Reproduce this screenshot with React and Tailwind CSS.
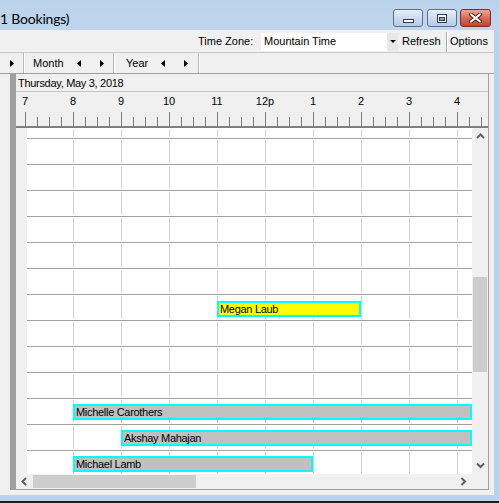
import React from 'react';

const hours = ['7', '8', '9', '10', '11', '12p', '1', '2', '3', '4'];

const bookings = {
    6: { name: 'Megan Laub', left: 190, width: 144, top: 6, bg: 'bg-[#ffff00]' },
    10: { name: 'Michelle Carothers', left: 46, width: 399, top: 5, bg: 'bg-[#c0c0c0]' },
    11: { name: 'Akshay Mahajan', left: 94, width: 351, top: 5, bg: 'bg-[#c0c0c0]' },
    12: { name: 'Michael Lamb', left: 46, width: 240, top: 5, bg: 'bg-[#c0c0c0]' },
};

function TriRight() {
    return (
        <svg width="4" height="7" viewBox="0 0 4 7"><path d="M0 0L4 3.5L0 7Z" fill="#000" /></svg>
    );
}

function TriLeft() {
    return (
        <svg width="4" height="7" viewBox="0 0 4 7"><path d="M4 0L0 3.5L4 7Z" fill="#000" /></svg>
    );
}

function Sep() {
    return <div className="w-[2px] self-stretch border-l border-[#b9b9b9] bg-white shrink-0" />;
}

function Chevron({ dir }) {
    const d = {
        up: 'M1 5L4.5 1.5L8 5',
        down: 'M1 1.5L4.5 5L8 1.5',
        left: 'M5 1L1.5 4.5L5 8',
        right: 'M1.5 1L5 4.5L1.5 8',
    }[dir];
    const vertical = dir === 'up' || dir === 'down';
    return (
        <svg width={vertical ? 9 : 7} height={vertical ? 7 : 9} viewBox={vertical ? '0 0 9 7' : '0 0 7 9'}>
            <path d={d} fill="none" stroke="#606060" strokeWidth="2" />
        </svg>
    );
}

// one schedule row: vertical hour lines + optional booking bar
function Row({ h, booking }) {
    return (
        <div className={`relative flex shrink-0 overflow-hidden border-b border-[#a0a0a0] ${h}`}>
            <div className="w-[46px] shrink-0" />
            {Array.from({ length: 9 }).map((_, i) => (
                <div key={i} className="w-[48px] shrink-0 my-[1px] border-l border-[#d4d4d4]" />
            ))}
            {booking && (
                <div
                    className={`absolute h-[16px] border-2 border-[#00ffff] ${booking.bg} flex items-center pl-[1px] text-[11px] leading-none tracking-[-0.3px] text-black whitespace-nowrap overflow-hidden`}
                    style={{ left: booking.left, width: booking.width, top: booking.top }}
                >
                    {booking.name}
                </div>
            )}
        </div>
    );
}

export default function App() {
    return (
        <div className="w-[499px] h-[503px] flex flex-col overflow-hidden bg-[#f0f0f0] font-['Liberation_Sans',Arial,sans-serif] text-[11px] text-black">
            {/* Title bar */}
            <div className="h-[30px] shrink-0 flex justify-between bg-gradient-to-b from-[#bad2eb] to-[#c1d6ee]">
                <div className="pt-[11px] text-[14px] leading-[16px] font-['Lato',sans-serif] tracking-[-0.2px]">1 Bookings)</div>
                <div className="flex items-start pt-[9px] pr-[8px]">
                    <div className="w-[30px] h-[18px] rounded-[3px] border border-[#5d6f8d] bg-gradient-to-b from-[#e9f0f9] via-[#cddbee] to-[#b6cae5] flex items-end justify-center pb-[3px]">
                        <div className="w-[11px] h-[4px] border border-[#2f3b50] bg-white" />
                    </div>
                    <div className="ml-[4px] w-[30px] h-[18px] rounded-[3px] border border-[#5d6f8d] bg-gradient-to-b from-[#e9f0f9] via-[#cddbee] to-[#b6cae5] flex items-center justify-center">
                        <svg width="10" height="9" viewBox="0 0 10 9">
                            <rect x="0.5" y="0.5" width="9" height="8" fill="white" stroke="#2f3b50" />
                            <rect x="2.5" y="3.5" width="5" height="3" fill="#8fa3bf" stroke="#2f3b50" />
                        </svg>
                    </div>
                    <div className="ml-[3px] w-[31px] h-[18px] rounded-[3px] border border-[#7a2f26] bg-gradient-to-b from-[#e9a898] via-[#d56c5c] to-[#c0432f] flex items-center justify-center">
                        <svg width="13" height="10" viewBox="0 0 13 10">
                            <path d="M2 1.5L11 8.5M11 1.5L2 8.5" stroke="#4a1e18" strokeWidth="4" strokeLinecap="square" />
                            <path d="M2 1.5L11 8.5M11 1.5L2 8.5" stroke="white" strokeWidth="2" strokeLinecap="square" />
                        </svg>
                    </div>
                </div>
            </div>

            <div className="flex flex-1 min-h-0">
                {/* Window content */}
                <div className="w-[494px] shrink-0 flex flex-col">
                    {/* Toolbar: time zone */}
                    <div className="h-[23px] shrink-0 flex items-center border-b border-[#c8c8c8] pl-[198px] pt-[1px]">
                        <div className="w-[63px]">Time Zone:</div>
                        <div className="w-[137px] h-[18px] bg-white flex items-center">
                            <div className="flex-1 pl-[3px]">Mountain Time</div>
                            <div className="w-[11px] h-full bg-[#e8e8e8] flex items-center justify-center">
                                <svg width="6" height="3" viewBox="0 0 6 3"><path d="M0 0H6L3 3Z" fill="#000" /></svg>
                            </div>
                        </div>
                        <div className="w-[48px] pl-[4px]">Refresh</div>
                        <div className="w-[2px] h-[20px] border-l border-[#a8a8a8] bg-white" />
                        <div className="pl-[2px]">Options</div>
                    </div>

                    {/* Toolbar: navigation */}
                    <div className="h-[21px] shrink-0 flex items-stretch border-b border-[#a0a0a0]">
                        <div className="w-[23px] flex items-center justify-center"><TriRight /></div>
                        <Sep />
                        <div className="w-[43px] pl-[8px] flex items-center">Month</div>
                        <div className="w-[22px] flex items-center justify-center"><TriLeft /></div>
                        <div className="w-[23px] flex items-center justify-center"><TriRight /></div>
                        <Sep />
                        <div className="w-[37px] pl-[11px] flex items-center">Year</div>
                        <div className="w-[22px] flex items-center justify-center"><TriLeft /></div>
                        <div className="w-[24px] flex items-center justify-center"><TriRight /></div>
                        <Sep />
                    </div>

                    {/* Scheduler panel */}
                    <div className="h-[416px] shrink-0 flex">
                        <div className="w-[10px] shrink-0" />
                        <div className="w-[6px] shrink-0 bg-[#a0a0a0]" />
                        <div className="w-[473px] shrink-0 flex flex-col border-r border-b border-[#a0a0a0]">
                            {/* Date */}
                            <div className="h-[18px] shrink-0 border-b border-[#c4c4c4] pl-[2px] pt-[3px] leading-[13px] tracking-[-0.3px]">
                                Thursday, May 3, 2018
                            </div>
                            {/* Hour labels */}
                            <div className="h-[20px] shrink-0 flex overflow-hidden pt-[3px] leading-[13px]">
                                <div className="flex shrink-0 ml-[-15px]">
                                    {hours.map((h) => (
                                        <div key={h} className="w-[48px] shrink-0 text-center">{h}</div>
                                    ))}
                                </div>
                            </div>
                            {/* Ticks */}
                            <svg className="shrink-0 block" width="472" height="14" viewBox="0 0 472 14">
                                {Array.from({ length: 40 }).map((_, k) => {
                                    const x = 9.5 + 12 * k;
                                    return <line key={k} x1={x} x2={x} y1={k % 4 === 0 ? 0 : 5} y2={14} stroke="#7a7a7a" strokeWidth="1" />;
                                })}
                            </svg>
                            <div className="h-[2px] shrink-0 bg-[#808080]" />

                            {/* Grid + vertical scrollbar */}
                            <div className="h-[346px] shrink-0 flex">
                                <div className="w-[11px] shrink-0 bg-[#f0f0f0]" />
                                <div className="w-[445px] shrink-0 bg-white flex flex-col overflow-hidden">
                                    <Row h="h-[11px]" />
                                    {Array.from({ length: 13 }).map((_, i) => (
                                        <Row key={i} h="h-[26px]" booking={bookings[i]} />
                                    ))}
                                </div>
                                <div className="w-[16px] shrink-0 bg-[#f0f0f0] flex flex-col">
                                    <div className="h-[17px] flex items-center justify-center"><Chevron dir="up" /></div>
                                    <div className="flex-1 flex flex-col">
                                        <div className="mt-[132px] mx-[1px] h-[95px] bg-[#cdcdcd]" />
                                    </div>
                                    <div className="h-[17px] flex items-center justify-center"><Chevron dir="down" /></div>
                                </div>
                            </div>

                            {/* Horizontal scrollbar */}
                            <div className="h-[15px] shrink-0 flex bg-[#f0f0f0]">
                                <div className="w-[17px] flex items-center justify-center"><Chevron dir="left" /></div>
                                <div className="w-[163px] my-[1px] bg-[#cdcdcd]" />
                                <div className="flex-1" />
                                <div className="w-[17px] flex items-center justify-center"><Chevron dir="right" /></div>
                                <div className="w-[16px]" />
                            </div>
                        </div>
                    </div>
                    <div className="flex-1" />
                </div>
                <div className="flex-1 bg-[#bad2eb]" />
            </div>
            <div className="h-[6px] shrink-0 bg-[#bad2eb]" />
            <div className="h-[2px] shrink-0 bg-[#1e1e1e]" />
        </div>
    );
}
